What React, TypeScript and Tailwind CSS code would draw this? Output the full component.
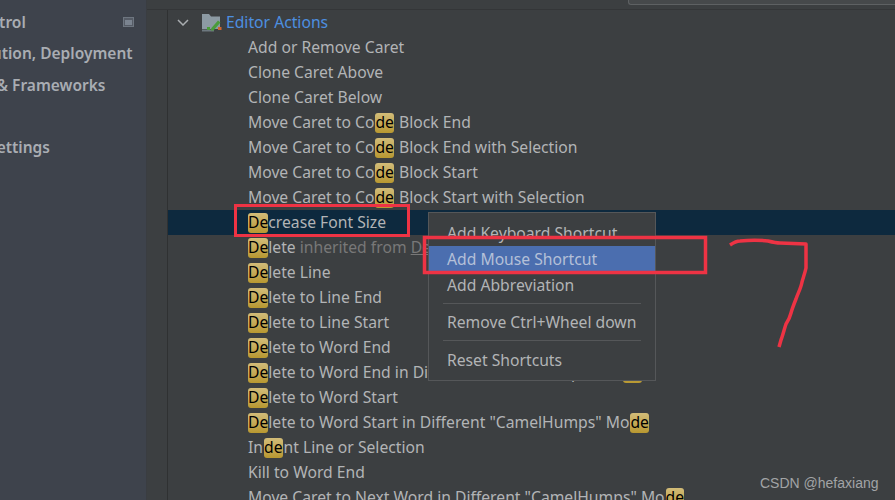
const rows: string[][] = [
  ["Add or Remove Caret"],
  ["Clone Caret Above"],
  ["Clone Caret Below"],
  ["Move Caret to Co", "de", " Block End"],
  ["Move Caret to Co", "de", " Block End with Selection"],
  ["Move Caret to Co", "de", " Block Start"],
  ["Move Caret to Co", "de", " Block Start with Selection"],
  ["", "De", "crease Font Size"],
  ["", "De", "lete"],
  ["", "De", "lete Line"],
  ["", "De", "lete to Line End"],
  ["", "De", "lete to Line Start"],
  ["", "De", "lete to Word End"],
  ["", "De", 'lete to Word End in Different "CamelHumps" Mo', "de"],
  ["", "De", "lete to Word Start"],
  ["", "De", 'lete to Word Start in Different "CamelHumps" Mo', "de"],
  ["In", "de", "nt Line or Selection"],
  ["Kill to Word End"],
  ['Move Caret to Next Word in Different "CamelHumps" Mo', "de"],
];

function Row({ parts, index }: { parts: string[]; index: number }) {
  return (
    <div className={`flex h-[25px] shrink-0 items-center whitespace-pre pl-[80px] ${index === 7 ? "bg-[#0d293e]" : ""}`}>
      {parts.map((part, i) =>
        i % 2 === 1 ? (
          <span
            key={i}
            className={`inline-flex h-[20px] items-center rounded-[3px] bg-gradient-to-b from-[#d2bc78] to-[#b8982f] text-black ${
              parts[i - 1] === "" ? "" : "mx-px"
            }`}
          >
            {part}
          </span>
        ) : (
          <span key={i}>{part}</span>
        )
      )}
      {index === 8 && (
        <span className="text-[#787878]">
          {" inherited from "}
          <span className="underline">Delete</span>
        </span>
      )}
    </div>
  );
}

function MenuItem({ label, active }: { label: string; active?: boolean }) {
  return (
    <div className={`flex h-[26px] items-center pl-[18px] pt-[2px] ${active ? "bg-[#4b6eaf] text-[#b4c0d8]" : ""}`}>{label}</div>
  );
}

export default function App() {
  return (
    <div className="relative flex h-[500px] w-[895px] overflow-hidden bg-[#3c3f41] text-[15.7px] text-[#b2b4b6] [font-family:'Noto_Sans',sans-serif]">
      <aside className="relative w-[147px] shrink-0 whitespace-nowrap border-r border-[#3a3d41] bg-[#3e434c] pt-[9px] text-[15.5px] font-semibold text-[#a9adb3]">
        <div className="ml-[-91px] h-[31px] leading-[26px]">Version Control</div>
        <div className="ml-[-89px] h-[32px] leading-[26px]">Build, Execution, Deployment</div>
        <div className="ml-[-90px] h-[62px] leading-[26px]">Languages &amp; Frameworks</div>
        <div className="ml-[-90px] leading-[26px]">Advanced Settings</div>
        <svg className="absolute left-[123px] top-[17px]" width="11" height="10" viewBox="0 0 11 10">
          <rect width="11" height="10" fill="#6e7680" />
          <rect x="1" y="1" width="9" height="8" fill="#565c66" />
          <rect x="2" y="3" width="7" height="5" fill="#7b8490" />
        </svg>
      </aside>

      <main className="flex min-w-0 flex-1 flex-col">
        <div className="flex h-[10px] shrink-0 justify-end border-b border-[#343638]">
          <div className="h-[5px] w-[267px] rounded-bl-[3px] border-b border-l border-[#5e6163] bg-[#46494b]" />
        </div>
        <div className="ml-[20px] flex min-h-0 flex-1 flex-col border-l border-[#2f3132]">
          <div className="flex h-[25px] shrink-0 items-center text-[#4d8fe0]">
            <svg className="ml-[9px]" width="12" height="7" viewBox="0 0 12 7" fill="none" stroke="#a9adb0" strokeWidth="1.5">
              <path d="M1 1l5 5 5-5" />
            </svg>
            <svg className="ml-[13px]" width="20" height="18" viewBox="0 0 20 18">
              <path d="M0 0h7l2 2.5h9V15H0z" fill="#8c9aa3" />
              <path d="M0 15.5h12v2H0z" fill="#6d787f" />
              <path d="M9 14.5l7-8 2.5 2-7 8H9z" fill="#4a9c3a" />
              <rect x="5" y="13" width="3" height="3" fill="#4a9c3a" />
              <rect x="16" y="13" width="3.5" height="3" fill="#d0662f" />
            </svg>
            <span className="ml-[4px]">Editor Actions</span>
          </div>
          {rows.map((parts, i) => (
            <Row key={i} parts={parts} index={i} />
          ))}
        </div>
      </main>

      <div className="absolute left-[428px] top-[212px] w-[228px] border border-[#555759] bg-[#3c3f41] pt-[7px]">
        <MenuItem label="Add Keyboard Shortcut" />
        <MenuItem label="Add Mouse Shortcut" active />
        <MenuItem label="Add Abbreviation" />
        <div className="mx-[14px] mb-[5px] mt-[5px] border-t border-[#555759]" />
        <MenuItem label="Remove Ctrl+Wheel down" />
        <div className="mx-[14px] mb-[6px] mt-[5px] border-t border-[#555759]" />
        <MenuItem label="Reset Shortcuts" />
        <div className="h-[7px]" />
      </div>

      <svg className="pointer-events-none absolute inset-0" width="895" height="500" fill="none" stroke="#ee3344">
        <rect x="235.5" y="205.5" width="173" height="30" strokeWidth="3" />
        <rect x="424.5" y="237.5" width="281" height="35" strokeWidth="3.5" />
        <path
          d="M730 245c3-2 6-4 10-4 9-1 20-1 28 0 4 1 8 2 12 2l26 1v24c-1 5-3 10-4 14-1 6-4 11-6 17-2 5-4 10-5 14-1 4-3 8-5 11-2 6-3 11-5 16l-2 7"
          strokeWidth="3.5"
          strokeLinejoin="round"
        />
      </svg>

      <div className="absolute left-[760px] top-[473px] text-[14px] text-[#a2a4a6] [font-family:'Liberation_Sans',sans-serif]">
        CSDN @hefaxiang
      </div>
    </div>
  );
}
